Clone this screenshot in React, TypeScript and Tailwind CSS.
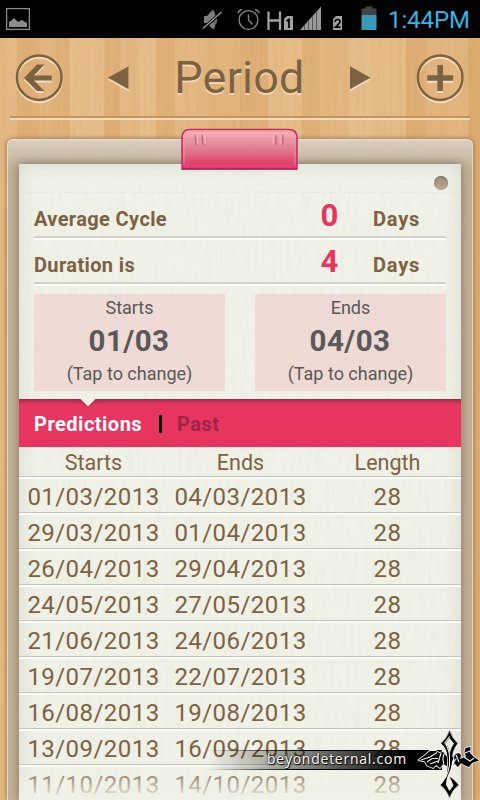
import React from "react";

const rows: [string, string, number][] = [
  ["01/03/2013", "04/03/2013", 28],
  ["29/03/2013", "01/04/2013", 28],
  ["26/04/2013", "29/04/2013", 28],
  ["24/05/2013", "27/05/2013", 28],
  ["21/06/2013", "24/06/2013", 28],
  ["19/07/2013", "22/07/2013", 28],
  ["16/08/2013", "19/08/2013", 28],
  ["13/09/2013", "16/09/2013", 28],
  ["11/10/2013", "14/10/2013", 28],
];

const planks: [number, number, string][] = [
  [0, 17, "#e4b986"], [17, 22, "#dfaf78"], [39, 13, "#e2b480"], [52, 18, "#e0b27c"], [70, 34, "#e6bd8b"],
  [104, 16, "#dfb079"], [120, 20, "#e4b986"], [140, 16, "#e6be8c"], [156, 19, "#dfb079"], [175, 33, "#e4b885"],
  [208, 32, "#e1b47e"], [240, 28, "#dfb079"], [268, 34, "#e6bc8a"], [302, 18, "#dfb079"], [320, 28, "#e3b783"],
  [348, 24, "#e6be8c"], [372, 34, "#e5bb88"], [406, 20, "#deae76"], [426, 22, "#e2b47f"], [448, 20, "#e3b681"], [468, 12, "#ddab72"],
];

// Fine vertical fibres laid over the wooden planks
function Wood() {
  return (
    <svg className="absolute inset-0" width="480" height="800">
      <filter id="grain" x="0" y="0" width="100%" height="100%">
        <feTurbulence type="fractalNoise" baseFrequency="0.3 0.008" numOctaves="3" seed="8" />
        <feColorMatrix values="0 0 0 0 0.6  0 0 0 0 0.35  0 0 0 0 0.1  1.2 0 0 0 -0.45" />
      </filter>
      {planks.map(([x, w, c]) => <rect key={x} x={x} y="38" width={w} height="762" fill={c} />)}
      <rect y="38" width="480" height="762" filter="url(#grain)" opacity="0.4" />
    </svg>
  );
}

function PaperGrain() {
  return (
    <svg className="absolute inset-0" width="442" height="636">
      <filter id="fibre" x="0" y="0" width="100%" height="100%">
        <feTurbulence type="fractalNoise" baseFrequency="0.28 0.035" numOctaves="2" seed="4" />
        <feColorMatrix values="0 0 0 0 0.6  0 0 0 0 0.6  0 0 0 0 0.5  1 0 0 0 -0.4" />
      </filter>
      <filter id="rough" x="0" y="0" width="100%" height="100%">
        <feTurbulence type="fractalNoise" baseFrequency="0.3" numOctaves="2" seed="2" />
        <feColorMatrix values="0 0 0 0 0.6  0 0 0 0 0.6  0 0 0 0 0.5  1 0 0 0 -0.42" />
      </filter>
      <rect y="28" width="442" height="608" filter="url(#fibre)" opacity="0.25" />
      <rect width="442" height="28" filter="url(#rough)" opacity="0.25" />
      <path d="M0 28.5H442" stroke="#e9e3cd" strokeDasharray="5 2 9 3" opacity=".5" />
    </svg>
  );
}

function StatusBar() {
  return (
    <div className="relative flex h-[38px] shrink-0 bg-black">
      <svg width="388" height="38" className="shrink-0">
        <rect x="6.6" y="8.6" width="22.8" height="20.8" fill="none" stroke="#8c8c8c" strokeWidth="1.3" />
        <path d="M9 27v-5l3-2 2-2 4 4 4-2 3 2 2 1v4z" fill="#8c8c8c" />
        <g fill="#7d7d7d">
          <path d="M204 16h3l6-6.500c2 3 2 17 0 20l-6-6.500h-3z" />
          <path d="M213.500 11q3.500 9 0 18" fill="none" stroke="#777" strokeWidth="1.300" />
          <path d="M215.500 16q2 4 0 8" fill="none" stroke="#777" strokeWidth="1.300" />
        </g>
        <path d="M202.500 29L222 12" stroke="#000" strokeWidth="3" />
        <path d="M203 28.500L221.500 12" stroke="#999" strokeWidth="1.400" />
        <g fill="none" stroke="#848484" strokeWidth="1.400">
          <circle cx="248.500" cy="20" r="9.400" />
          <path d="M248.500 14.500V20l4 4.500M238 13q1-3 4-3.500M255 9.500q3 .5 4.500 3.500" />
        </g>
        <path d="M268.500 11.500V30M280 11.500V30M268.500 20.500H280" stroke="#a0a0a0" strokeWidth="2.300" />
        <path d="M284 19l3-3h6v14h-9z" fill="#a0a0a0" />
        <path d="M286.500 21l2.500-1.500v8.500" fill="none" stroke="#000" strokeWidth="1.800" />
        <path d="M300 30L321 6.500V30z" fill="#999" />
        <path d="M304.500 25V30M308.500 20.500V30M312.500 16V30M316.500 11.500V30" stroke="#555" strokeWidth="1" />
        <path d="M333 19l3-3h6v14h-9z" fill="#a0a0a0" />
        <path d="M335 22q0-2.500 2.500-2.500t2.500 2q0 1.500-4.500 5.700h5" fill="none" stroke="#000" strokeWidth="1.700" />
        <path d="M361.500 8.500h4V6.500h7v2h4V15h-15z" fill="#444" />
        <path d="M361.500 15h15v15h-15z" fill="#3a98bd" />
      </svg>
      <span className="pt-[6px] text-[24px] leading-[28px] tracking-[-0.1px] text-[#33b5e5]">1:44PM</span>
    </div>
  );
}

function Engraved({ children, w, label }: { children: React.ReactNode; w: number; label: string }) {
  return (
    <button aria-label={label} className="shrink-0">
      <svg width={w} height="52" viewBox={`0 0 ${w} 52`} className="block drop-shadow-[0_2px_0_#f4dcc0]">{children}</svg>
    </button>
  );
}

function Header() {
  return (
    <header className="relative h-[82px] shrink-0">
      <div className="flex h-[79px] items-center justify-between pl-[13px] pr-[14px]">
        <Engraved w={52} label="Back">
          <circle cx="26.200" cy="25.700" r="22.300" fill="none" stroke="#7d6242" strokeWidth="2.500" />
          <path d="M11 26L24 12.500h7.500L21 23.500h17.700v5H21l10.500 10.500H24z" fill="#7d6242" />
        </Engraved>
        <Engraved w={22} label="Previous">
          <path d="M0 25.700L20.500 14.200V37.200z" fill="#7d6242" />
        </Engraved>
        <h1 className="mt-[1px] w-[132px] whitespace-nowrap text-center text-[45px] leading-[52px] tracking-[0.2px] text-[#7d6242] [text-shadow:0_2px_0_#f1d6b5]">Period</h1>
        <Engraved w={22} label="Next">
          <path d="M1 14.200L21.500 25.700L1 37.200z" fill="#7d6242" />
        </Engraved>
        <Engraved w={52} label="Add">
          <circle cx="26.200" cy="25.700" r="22.300" fill="none" stroke="#7d6242" strokeWidth="2.500" />
          <path d="M23.300 13h5.700v10.200h10.200v5.500H29V39h-5.700V28.700H13.200v-5.500h10.100z" fill="#7d6242" />
        </Engraved>
      </div>
      <div className="mx-[10px] mt-[-1px] h-[4px] border-b-2 border-t-2 border-b-[#f2d9b9] border-t-[#c99557]" />
    </header>
  );
}

function Clip() {
  return (
    <svg className="absolute left-[173px] top-[-11px] z-10 -ml-px -mt-px" width="119" height="44">
      <defs>
        <linearGradient id="clip" x2="0" y2="1">
          <stop stopColor="#f8b0b8" /><stop offset=".2" stopColor="#f0a0ac" /><stop offset=".28" stopColor="#e596a3" /><stop offset=".55" stopColor="#e0748a" /><stop offset=".86" stopColor="#de4268" /><stop offset="1" stopColor="#dc376a" />
        </linearGradient>
      </defs>
      <path d="M2 41V10Q2 1.500 10 1.500H109Q117 1.500 117 10V41z" fill="url(#clip)" stroke="#c52b58" strokeWidth="1.500" />
      <path d="M4 37V10Q4 3.500 10 3.500H109Q115 3.500 115 10V37" fill="none" stroke="#f4a1b5" opacity=".65" />
      <path d="M3 10.500H116" stroke="#d97b90" opacity=".45" />
      <path d="M2.500 38.200H116.500" stroke="#e54180" strokeWidth="3.500" />
      <path d="M2 40.700H117" stroke="#b9224c" strokeWidth="1.700" />
      <g fill="none" stroke="#bb637c" strokeWidth="1.200">
        <path d="M15.500 7q-1 4 1 10M22.500 7q-1 4 1 10M95.500 7q1 5 0 10M102.500 7q1 5 0 10" />
        <path d="M17 7q1 5 .5 9M24.500 7q1 5 .5 9M93.500 7q-1 6 0 9M100.500 7q-1 6 0 9" stroke="#f2b3c2" />
      </g>
    </svg>
  );
}

function Summary({ label, value, className }: { label: string; value: number; className: string }) {
  return (
    <div className={`flex border-b-[2.500px] border-[#d4d0ca] font-bold shadow-[0_2px_0_#fafaf6] text-[#7d6242] ${className}`}>
      <span className="w-[286px] text-[20px] leading-[24px] tracking-[0.370px]">{label}</span>
      <span className="mt-[-6px] w-[53px] pl-[0.500px] text-[31px] leading-[30px] text-[#e6365f]">{value}</span>
      <span className="text-[20px] leading-[24px] tracking-[0.800px]">Days</span>
    </div>
  );
}

function DateCard({ label, date }: { label: string; date: string }) {
  return (
    <button className="flex h-[97px] w-[191px] flex-col items-center bg-[#eeccc9]/60 pt-[3px] text-[#585958]">
      <span className="text-[18px] leading-[22px]">{label}</span>
      <span className="mt-[3px] -translate-x-[0.500px] text-[29.500px] font-bold leading-[38px] tracking-[0.450px]">{date}</span>
      <span className="mt-[3px] text-[18px] leading-[22px]">(Tap to change)</span>
    </button>
  );
}

function Watermark() {
  return (
    <div className="absolute left-[200px] top-[728px] z-20 h-[72px] w-[280px]">
      <div className="ml-[8px] mt-[22px] h-[20px] w-[234px] border-y border-black bg-gradient-to-r from-transparent via-black/50 via-45% to-black to-85% pl-[59px] [border-image:linear-gradient(90deg,transparent,black_40%)_1]">
        <span className="block -translate-y-px whitespace-nowrap font-['Open_Sans','Noto_Sans',sans-serif] text-[14px] leading-[17px] tracking-[0.750px] text-white [text-shadow:1px_1px_1px_#000,0_0_2px_#000]">beyondeternal.com</span>
      </div>
      <svg className="absolute left-[212px] top-[-3px]" width="68" height="75" viewBox="412 725 68 75">
        <g stroke="#e8e8e6" strokeWidth="1.800" strokeLinejoin="round" fill="#000" paintOrder="stroke">
          <path d="M418.500 760L424 756L430 751L436 751L439 753L443 752L447 757L447 766L443 764L440 768L436 765L433 768L427 765.500L425 761.500z" />
          <path d="M452 757L456 754L459 753L461 755.500L460 759L466 756.500L464.500 752L465.500 748L470.500 747L470 753L474 757L479 760.500L472 763L469 767L464 765L461 763L458 767L454 763L457 758L452 761z" />
        </g>
        <g fill="#000">
          <path fillRule="evenodd" d="M449.500 730Q451 737 457.500 743.500Q453 749 452 757Q452.500 765 450 771Q446 778 446 785L449.500 791L453.500 785.500Q452 781 449.500 777Q454 779 458.500 785Q452 790 449.500 798Q447 790 440.500 785Q447 779 447.500 770Q448.500 761 447 754Q446.500 748 441 743.500Q448 737 449.500 730zM449.500 738L445.500 743.500Q449 747 449.700 754Q450.500 748 454 743.500z" />
        </g>
        <g fill="none" stroke="#f3f3ef" strokeWidth="1.100">
          <path d="M449.600 736.500L445 743Q449 749 449.500 756V765Q448.500 772 445.500 778" />
          <path d="M421 760L430 757L437 752.500M427 762L432 758.500H438M430 764L438 761M441 753L438 763M444 754Q442 759 444 764M454 755Q453 766 450 773M456 755L459 762M464 757L470 761L474 758M465 753L470 751" />
          <path d="M449.600 731Q447 738 441 743M450 731Q452 738 458 743.500M458.500 785Q453 779 450.500 777M441 785.500Q447 790 449.500 797Q452 790 458 785.500" stroke="#777" strokeWidth=".6" />
        </g>
      </svg>
    </div>
  );
}

export default function App() {
  return (
    <div className="relative flex h-[800px] w-[480px] flex-col overflow-hidden bg-[#e2b57f] font-[Roboto,sans-serif]">
      <Wood />
      <StatusBar />
      <Header />
      <main className="relative mx-[7px] mt-[19px] flex-1 rounded-t-[6px] border border-b-0 border-[#e4ddd2] bg-gradient-to-b from-[#d9d0c4]/95 to-[#bfae99]/90 to-[32px] px-[11px] pt-[24px] shadow-[0_0_5px_#8b653b]">
        <Clip />
        <section className="relative h-[636px] bg-[#f0f1e7] shadow-[0_-1px_9px_#75654fcc]">
          <PaperGrain />
          <div className="pointer-events-none absolute inset-0 shadow-[inset_0_0_18px_#d5dcd2]" />
          <div className="absolute right-[13px] top-[12px] size-[14px] rounded-full bg-gradient-to-b from-[#9a8b7c] to-[#b9ab99] shadow-[inset_0_1px_2px_#827365]" />
          <div className="relative px-[15px] pt-[43px]">
            <Summary label="Average Cycle" value={0} className="h-[31px]" />
            <Summary label="Duration is" value={4} className="mt-[15px] h-[31px]" />
            <div className="mt-[10px] flex justify-between">
              <DateCard label="Starts" date="01/03" />
              <DateCard label="Ends" date="04/03" />
            </div>
          </div>
          <nav className="relative mt-[8px] flex h-[48px] items-center bg-[#e6365f] bg-gradient-to-b from-[#9e2947] to-[#e6365f] to-[5px] px-[15px] pt-[2px] text-[20px] font-bold">
            <svg className="absolute left-[60px] top-0" width="18" height="9"><path d="M0 1H2L9 8L16 1H18" fill="none" stroke="#a52a48" strokeWidth="2" opacity=".5" /><path d="M1.500 0H16.500L9 7.500z" fill="#f0f1e7" /></svg>
            <span className="w-[125px] tracking-[0.500px] text-white">Predictions</span>
            <span className="h-[18px] w-[2.500px] bg-black" />
            <span className="ml-[15.500px] tracking-[0.500px] text-[#9d2447]">Past</span>
          </nav>
          <div className="relative grid h-[30px] grid-cols-3 border-b border-[#c6c5bd] pl-px pt-[1px] text-center text-[21.500px] leading-[30px] text-[#7d6242] shadow-[0_2px_0_#fafaf6]">
            <span>Starts</span><span>Ends</span><span>Length</span>
          </div>
          {rows.map(([start, end, length]) => (
            <div key={start} className="relative grid h-[36px] grid-cols-3 border-b border-[#c6c5bd] pl-px pt-[5px] text-center text-[24px] leading-[30px] tracking-[0.450px] text-[#7d6242] shadow-[0_2px_0_#fafaf6]">
              <span>{start}</span><span>{end}</span><span>{length}</span>
            </div>
          ))}
          <div className="absolute inset-x-0 bottom-0 h-[34px] bg-gradient-to-b from-transparent to-[#f0f1e7]" />
        </section>
      </main>
      <Watermark />
    </div>
  );
}
